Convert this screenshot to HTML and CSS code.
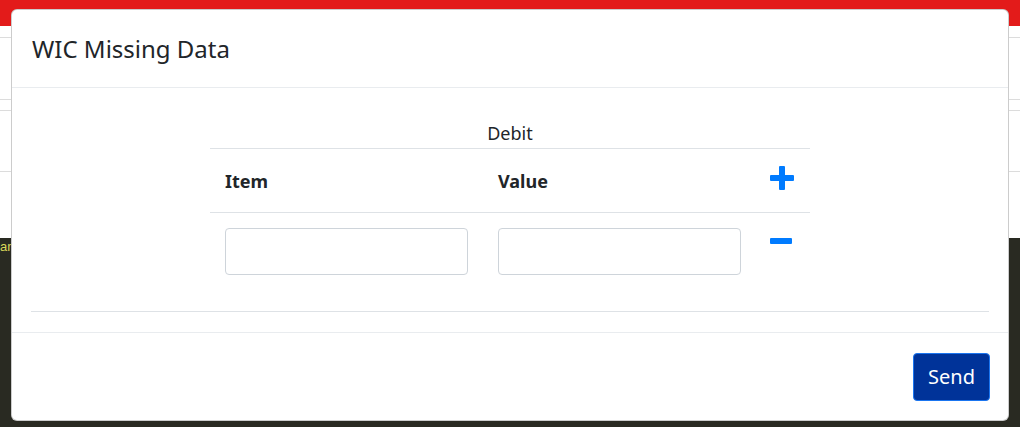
FILE: index.html
```html
<!DOCTYPE html>
<html lang="en">
<head>
<meta charset="utf-8">
<title>WIC Missing Data</title>
<link rel="stylesheet" href="styles.css">
</head>
<body>
<div class="page">
  <div class="topbar"></div>
  <div class="band b1"></div>
  <div class="band b2"></div>
  <div class="band b3"></div>
  <div class="band b4"></div>
  <div class="spacer"></div>
  <div class="dark"><span class="dark-text">an</span></div>
</div>

<div class="modal" role="dialog" aria-labelledby="modal-title">
  <div class="modal-header">
    <h5 class="modal-title" id="modal-title">WIC Missing Data</h5>
  </div>
  <div class="modal-body">
    <table class="debit-table">
      <caption>Debit</caption>
      <colgroup>
        <col class="col-item">
        <col class="col-value">
        <col class="col-action">
      </colgroup>
      <thead>
        <tr>
          <th>Item</th>
          <th>Value</th>
          <th>
            <svg class="icon-plus" width="24" height="24" viewBox="0 0 24 24" aria-label="Add row">
              <rect x="0" y="9" width="24" height="6" rx="1" fill="#007bff"/>
              <rect x="9" y="0" width="6" height="24" rx="1" fill="#007bff"/>
            </svg>
          </th>
        </tr>
      </thead>
      <tbody>
        <tr>
          <td><input class="form-control" type="text"></td>
          <td><input class="form-control" type="text"></td>
          <td>
            <svg class="icon-minus" width="22" height="6" viewBox="0 0 22 6" aria-label="Remove row">
              <rect x="0" y="0" width="22" height="6" rx="1" fill="#007bff"/>
            </svg>
          </td>
        </tr>
      </tbody>
    </table>
    <hr class="divider">
  </div>
  <div class="modal-footer">
    <button class="btn-send" type="button">Send</button>
  </div>
</div>
</body>
</html>
```

FILE: styles.css
```css
* { box-sizing: border-box; }

html, body {
  margin: 0;
  padding: 0;
}

body {
  width: 1020px;
  height: 427px;
  overflow: hidden;
  font-family: "Noto Sans", "Open Sans", "DejaVu Sans", sans-serif;
  color: #212529;
  background: #ffffff;
  position: relative;
}

/* ---------- background page ---------- */
.page {
  display: flex;
  flex-direction: column;
  height: 427px;
}

.topbar {
  height: 26px;
  background: #e31b1a;
  flex: none;
}

.band {
  flex: none;
  border-bottom: 1px solid #dcdcdc;
}
.b1 { height: 12px; }
.b2 { height: 62px; }
.b3 { height: 11px; }
.b4 { height: 61px; }

.spacer {
  height: 66px;
  flex: none;
}

.dark {
  flex: 1;
  background: #292a22;
  padding-top: 2px;
  font-family: "Liberation Sans", sans-serif;
  font-size: 13px;
  line-height: 14px;
}

.dark-text {
  color: #d9d95a;
}

/* ---------- modal ---------- */
.modal {
  position: absolute;
  left: 11px;
  top: 9px;
  width: 998px;
  height: 412px;
  background: #ffffff;
  border: 1px solid rgba(0, 0, 0, 0.2);
  border-radius: 6px;
  display: flex;
  flex-direction: column;
}

.modal-header {
  padding: 21px 20px 20px;
  border-bottom: 1px solid #e9ecef;
}

.modal-title {
  margin: 0;
  font-size: 24px;
  line-height: 36px;
  font-weight: 400;
}

.modal-body {
  padding: 0 19px;
}

.debit-table {
  width: 600px;
  margin: 0 auto;
  border-collapse: collapse;
  table-layout: fixed;
  font-size: 18px;
}

.debit-table caption {
  caption-side: top;
  text-align: center;
  padding: 30px 0 0;
  line-height: 30px;
  font-size: 18px;
}

.col-item { width: 273px; }
.col-value { width: 273px; }
.col-action { width: 54px; }

.debit-table th {
  text-align: left;
  font-weight: 700;
  padding: 17px 15px 16px;
  line-height: 30px;
  border-top: 1px solid #dee2e6;
  border-bottom: 1px solid #dee2e6;
  vertical-align: top;
}

.debit-table th:last-child {
  padding-left: 14px;
  padding-right: 0;
}

.debit-table td {
  padding: 15px;
  vertical-align: top;
}

.debit-table td:last-child {
  padding-left: 14px;
  padding-right: 0;
}

.icon-plus {
  display: block;
  margin-top: 0;
}

.icon-minus {
  display: block;
  margin-top: 10px;
}

.form-control {
  display: block;
  width: 100%;
  height: 47px;
  padding: 6px 12px;
  font-family: inherit;
  font-size: 18px;
  color: #495057;
  background: #ffffff;
  border: 1px solid #ced4da;
  border-radius: 4px;
}

.divider {
  margin: 21px 0 20px;
  border: 0;
  border-top: 1px solid #dee2e6;
}

.modal-footer {
  border-top: 1px solid #e9ecef;
  padding: 20px 18px 18px;
  display: flex;
  justify-content: flex-end;
}

.btn-send {
  font-family: inherit;
  font-size: 20px;
  line-height: 30px;
  height: 48px;
  width: 77px;
  padding: 0;
  color: #ffffff;
  background: #003399;
  border: 1px solid #1a75f0;
  border-radius: 4px;
}
```
